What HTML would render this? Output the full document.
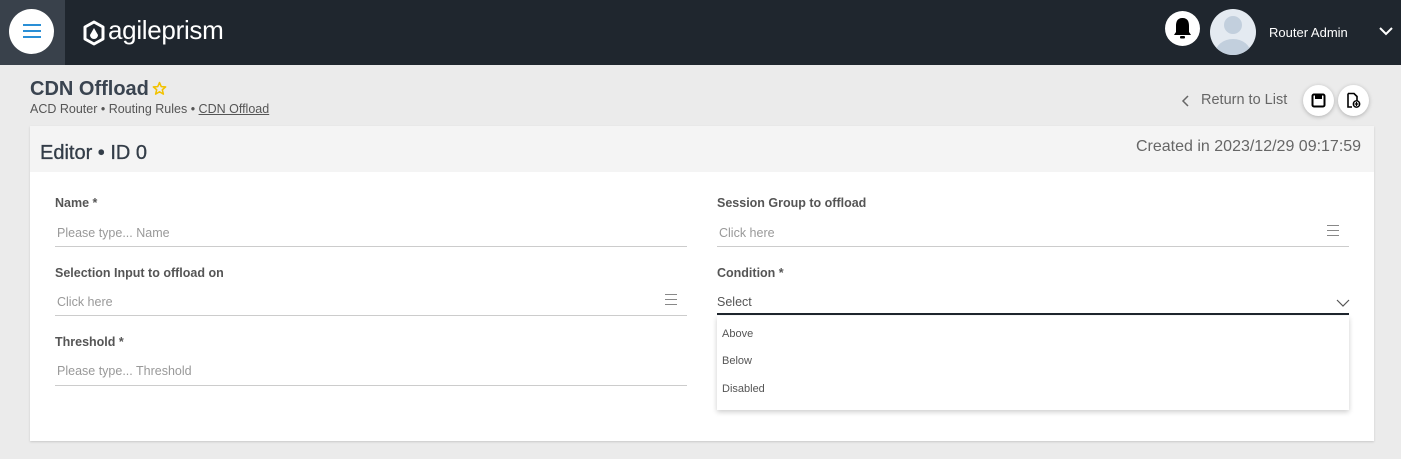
<!DOCTYPE html>
<html><head><meta charset="utf-8"><style>
*{margin:0;padding:0;box-sizing:border-box}
body{width:1401px;height:459px;background:#ebebeb;font-family:"Liberation Sans",sans-serif;position:relative;overflow:hidden;color:#3c4650}
.a{position:absolute}
.top{left:0;top:0;width:1401px;height:65px;background:#1f262e}
.lb{left:0;top:0;width:65px;height:65px;background:#39414b}
.lbl{font-size:12.5px;font-weight:bold;color:#555}
.ph{font-size:12.5px;color:#999}
.ln{height:1px;background:#ccc}
.circ{border-radius:50%;background:#fff;box-shadow:0 1px 4px rgba(0,0,0,.25)}
</style></head><body>
<div class="a top"></div>
<div class="a lb"></div>
<div class="a circ" style="left:9px;top:9px;width:45px;height:45px;box-shadow:none"></div>
<div class="a" style="left:23px;top:24px;width:18px;height:2px;background:#2a8fd6;box-shadow:0 6px 0 #2a8fd6,0 12px 0 #2a8fd6"></div>
<svg class="a" style="left:82px;top:20px" width="24" height="26" viewBox="0 0 24 26"><path d="M12 2 L21 7 V19 L12 24 L3 19 V7 Z" fill="none" stroke="#fff" stroke-width="3" stroke-linejoin="round"/><path d="M12 8 L16 15 A4 4 0 0 1 8 15 Z" fill="#fff"/></svg>
<div class="a" style="left:108px;top:15px;font-size:26px;color:#fff;letter-spacing:-0.3px">agileprism</div>
<div class="a circ" style="left:1165px;top:11px;width:35px;height:35px;box-shadow:none"></div>
<svg class="a" style="left:1171px;top:16px" width="23" height="25" viewBox="0 0 23 25"><path d="M11.5 2 C6 2 5 6 5 10 V16 L3 19 H20 L18 16 V10 C18 6 17 2 11.5 2Z" fill="#000"/><rect x="9" y="20" width="5" height="2.5" rx="1" fill="#000"/></svg>
<div class="a" style="left:1210px;top:9px;width:46px;height:46px;border-radius:50%;background:#e4eaf1;overflow:hidden">
<div class="a" style="left:14px;top:7px;width:18px;height:18px;border-radius:50%;background:#c2cfdd"></div>
<div class="a" style="left:5px;top:30px;width:36px;height:30px;border-radius:50%;background:#c2cfdd"></div></div>
<div class="a" style="left:1269px;top:25px;font-size:13px;color:#fff">Router Admin</div>
<svg class="a" style="left:1378px;top:25px" width="16" height="12"><path d="M2 3 L8 9 L14 3" stroke="#fff" stroke-width="2" fill="none"/></svg>

<div class="a" style="left:30px;top:78px;font-size:20px;font-weight:bold;color:#3a4450">CDN Offload</div>
<svg class="a" style="left:152px;top:81px" width="15" height="15" viewBox="0 0 24 24"><path d="M12 2.5 L14.8 9 L21.8 9.5 L16.5 14 L18.2 21 L12 17.2 L5.8 21 L7.5 14 L2.2 9.5 L9.2 9 Z" fill="none" stroke="#f2c200" stroke-width="2.5" stroke-linejoin="round"/></svg>
<div class="a" style="left:30px;top:102px;font-size:12.5px;color:#555">ACD Router • Routing Rules • <span style="text-decoration:underline">CDN Offload</span></div>
<svg class="a" style="left:1181px;top:94px" width="10" height="14"><path d="M7 2 L2 7 L7 12" stroke="#666" stroke-width="1.5" fill="none"/></svg>
<div class="a" style="left:1201px;top:92px;font-size:14.5px;color:#666">Return to List</div>
<div class="a circ" style="left:1303px;top:85px;width:31px;height:31px"></div>
<svg class="a" style="left:1311px;top:93px" width="15" height="15"><rect x="1.5" y="1.5" width="12" height="12" rx="1.5" fill="none" stroke="#000" stroke-width="2"/><rect x="4" y="2" width="7" height="4" fill="#000"/></svg>
<div class="a circ" style="left:1338px;top:85px;width:31px;height:31px"></div>
<svg class="a" style="left:1346px;top:92px" width="16" height="17"><path d="M2 1.5 H8 L11 4.5 V9 M6 15 H2 V1.5" fill="none" stroke="#000" stroke-width="1.6"/><circle cx="10.5" cy="12" r="3.2" fill="none" stroke="#000" stroke-width="1.4"/><path d="M10.5 10v4M8.5 12h4" stroke="#000" stroke-width="1.2"/></svg>

<div class="a" style="left:30px;top:126px;width:1344px;height:315px;background:#fff;box-shadow:0 1px 2px rgba(0,0,0,.15)"></div>
<div class="a" style="left:30px;top:126px;width:1344px;height:46px;background:#f4f4f4"></div>
<div class="a" style="left:40px;top:142px;font-size:20px;color:#333d48;-webkit-text-stroke:0.3px #333d48">Editor • ID 0</div>
<div class="a" style="left:1136px;top:138px;font-size:16px;color:#666">Created in 2023/12/29 09:17:59</div>

<div class="a lbl" style="left:55px;top:196px">Name *</div>
<div class="a ph" style="left:57px;top:226px">Please type... Name</div>
<div class="a ln" style="left:55px;top:246px;width:632px"></div>
<div class="a lbl" style="left:55px;top:266px">Selection Input to offload on</div>
<div class="a ph" style="left:57px;top:295px">Click here</div>
<div class="a" style="left:665px;top:294px;width:12px;height:1px;background:#888;box-shadow:0 5px 0 #888,0 10px 0 #888"></div>
<div class="a ln" style="left:55px;top:315px;width:632px"></div>
<div class="a lbl" style="left:55px;top:335px">Threshold *</div>
<div class="a ph" style="left:57px;top:364px">Please type... Threshold</div>
<div class="a ln" style="left:55px;top:385px;width:632px"></div>

<div class="a lbl" style="left:717px;top:196px">Session Group to offload</div>
<div class="a ph" style="left:719px;top:226px">Click here</div>
<div class="a" style="left:1327px;top:225px;width:12px;height:1px;background:#888;box-shadow:0 5px 0 #888,0 10px 0 #888"></div>
<div class="a ln" style="left:717px;top:246px;width:632px"></div>
<div class="a lbl" style="left:717px;top:266px">Condition *</div>
<div class="a" style="left:717px;top:295px;font-size:12.5px;color:#555">Select</div>
<svg class="a" style="left:1336px;top:298px" width="14" height="10"><path d="M1 2 L7 8 L13 2" stroke="#555" stroke-width="1.2" fill="none"/></svg>
<div class="a" style="left:717px;top:313px;width:632px;height:2px;background:#1f262e"></div>
<div class="a" style="left:717px;top:316px;width:632px;height:94px;background:#fff;box-shadow:0 2px 5px rgba(0,0,0,.2)"></div>
<div class="a" style="left:722px;top:328px;font-size:11px;color:#555">Above</div>
<div class="a" style="left:722px;top:355px;font-size:11px;color:#555">Below</div>
<div class="a" style="left:722px;top:383px;font-size:11px;color:#555">Disabled</div>
</body></html>
